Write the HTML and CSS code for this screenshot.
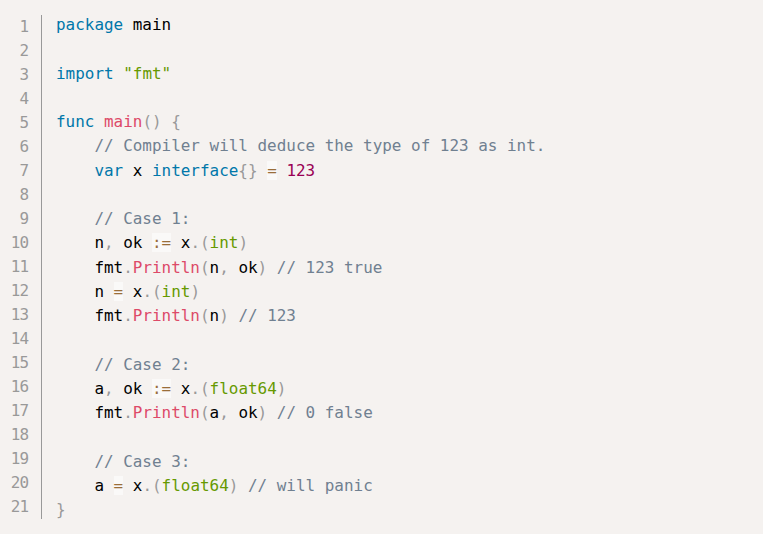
FILE: index.html
```html
<!DOCTYPE html>
<html lang="en">
<head>
<meta charset="utf-8">
<title>Go type assertion</title>
<link rel="stylesheet" href="styles.css">
</head>
<body>
<pre class="code-block"><div class="gutter"><span>1</span><span>2</span><span>3</span><span>4</span><span>5</span><span>6</span><span>7</span><span>8</span><span>9</span><span>10</span><span>11</span><span>12</span><span>13</span><span>14</span><span>15</span><span>16</span><span>17</span><span>18</span><span>19</span><span>20</span><span>21</span></div><code class="code"><div class="line"><span class="kw">package</span> main</div><div class="line"></div><div class="line"><span class="kw">import</span> <span class="str">"fmt"</span></div><div class="line"></div><div class="line"><span class="kw">func</span> <span class="fn">main</span><span class="p">()</span> <span class="p">{</span></div><div class="line">    <span class="cm">// Compiler will deduce the type of 123 as int.</span></div><div class="line">    <span class="kw">var</span> x <span class="kw">interface</span><span class="p">{}</span> <span class="op">=</span> <span class="num">123</span></div><div class="line"></div><div class="line">    <span class="cm">// Case 1:</span></div><div class="line">    n<span class="p">,</span> ok <span class="op">:=</span> x<span class="p">.(</span><span class="bi">int</span><span class="p">)</span></div><div class="line">    fmt<span class="p">.</span><span class="fn">Println</span><span class="p">(</span>n<span class="p">,</span> ok<span class="p">)</span> <span class="cm">// 123 true</span></div><div class="line">    n <span class="op">=</span> x<span class="p">.(</span><span class="bi">int</span><span class="p">)</span></div><div class="line">    fmt<span class="p">.</span><span class="fn">Println</span><span class="p">(</span>n<span class="p">)</span> <span class="cm">// 123</span></div><div class="line"></div><div class="line">    <span class="cm">// Case 2:</span></div><div class="line">    a<span class="p">,</span> ok <span class="op">:=</span> x<span class="p">.(</span><span class="bi">float64</span><span class="p">)</span></div><div class="line">    fmt<span class="p">.</span><span class="fn">Println</span><span class="p">(</span>a<span class="p">,</span> ok<span class="p">)</span> <span class="cm">// 0 false</span></div><div class="line"></div><div class="line">    <span class="cm">// Case 3:</span></div><div class="line">    a <span class="op">=</span> x<span class="p">.(</span><span class="bi">float64</span><span class="p">)</span> <span class="cm">// will panic</span></div><div class="line"><span class="p">}</span></div></code></pre>
</body>
</html>
```
FILE: styles.css
```css
html, body {
  margin: 0;
  padding: 0;
  background: #f5f2f0;
  height: 100%;
}

.code-block {
  margin: 0;
  padding: 13px 0 0 0;
  display: flex;
  align-items: flex-start;
  font-family: "DejaVu Sans Mono", "Liberation Mono", monospace;
  font-size: 15.95px;
  line-height: 24px;
  color: #000;
  background: #f5f2f0;
  tab-size: 4;
}

.gutter {
  display: flex;
  flex-direction: column;
  margin-top: 2px;
  width: 28px;
  padding-right: 13px;
  border-right: 1px solid #999;
  text-align: right;
  color: #999;
  letter-spacing: -1px;
}

.gutter span {
  display: block;
  height: 24px;
}

.code {
  display: block;
  padding-left: 14px;
  font-family: inherit;
  white-space: pre;
}

.line {
  height: 24.28px;
  line-height: 24.28px;
}

.kw { color: #0077aa; }
.str { color: #669900; }
.bi { color: #669900; }
.fn { color: #dd4a68; }
.p { color: #999999; }
.cm { color: #708090; }
.num { color: #990055; }
.op {
  color: #9a6e3a;
  background: hsla(0, 0%, 100%, 0.5);
}
```
